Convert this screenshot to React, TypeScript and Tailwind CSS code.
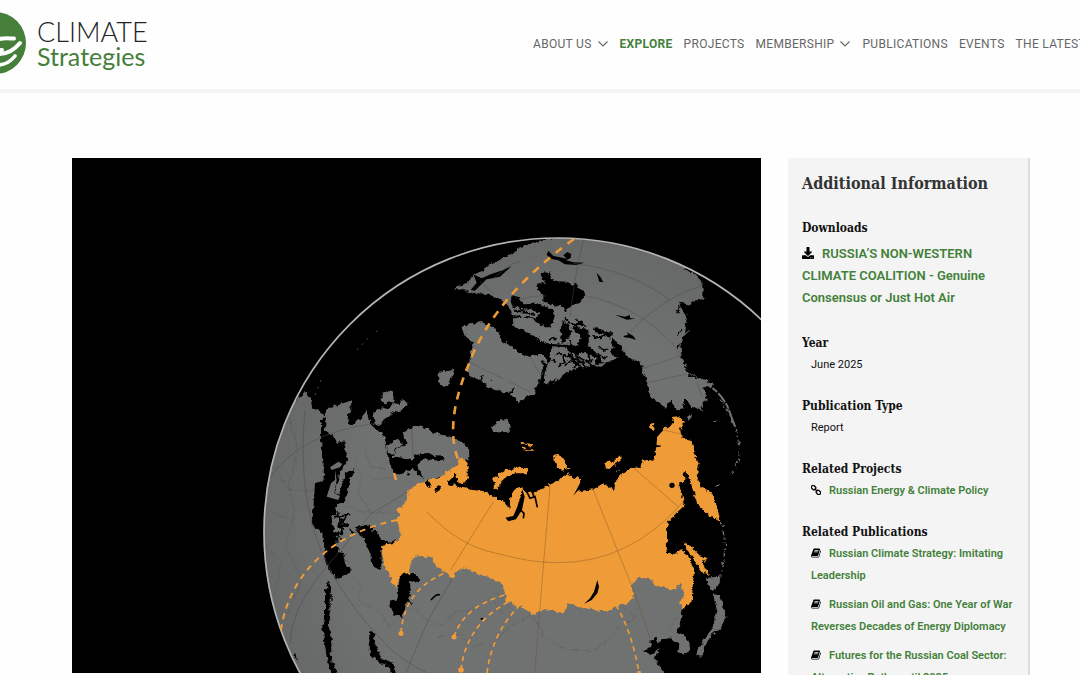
import React from "react";
import { FaDownload } from "react-icons/fa";

const navItems = [
  { label: "ABOUT US", menu: true },
  { label: "EXPLORE", active: true },
  { label: "PROJECTS" },
  { label: "MEMBERSHIP", menu: true },
  { label: "PUBLICATIONS" },
  { label: "EVENTS" },
  { label: "THE LATEST" },
];

const publications = [
  "Russian Climate Strategy: Imitating Leadership",
  "Russian Oil and Gas: One Year of War Reverses Decades of Energy Diplomacy",
  "Futures for the Russian Coal Sector: Alternative Paths until 2035",
];

function Chevron() {
  return (
    <svg className="h-3 w-3" viewBox="0 0 12 12" fill="none" stroke="#666" strokeWidth="1.1" aria-hidden="true">
      <path d="M1.500 3.500 6 8l4.500-4.500" />
    </svg>
  );
}

function BookIcon() {
  return (
    <svg className="mr-2 inline h-[10px] w-[10px] align-[-1px]" viewBox="60 128 1680 1540" fill="#000" aria-hidden="true">
      <path d="M1703 478q40 57 18 129l-275 906q-19 64-76.5 107.5t-122.5 43.5h-923q-77 0-148.5-53.5t-99.5-131.5q-24-67-2-127 0-4 3-27t4-37q1-8-3-21.5t-3-19.5q2-11 8-21t16.5-23.5 16.5-23.5q23-38 45-91.5t30-91.5q3-10 .5-30t-.5-28q3-11 17-28t17-23q21-36 42-92t25-90q1-9-2.5-32t.5-28q4-13 22-30.5t22-22.5q19-26 42.5-84.5t27.5-96.5q1-8-3-25.5t-2-26.5q2-8 9-18t18-23 17-21q8-12 16.5-30.5t15-35 16-36 19.5-32 26.5-23.5 36-11.5 47.5 5.5l-1 3q38-9 51-9h761q74 0 114 56t18 130l-274 906q-36 119-71.5 153.5t-128.5 34.5h-869q-27 0-38 15-11 16-1 43 24 70 144 70h923q29 0 56-15.5t35-41.5l300-987q7-22 5-57 38 15 59 43zm-1064 2q-4 13 2 22.5t20 9.5h608q13 0 25.5-9.5t16.5-22.5l21-64q4-13-2-22.5t-20-9.5h-608q-13 0-25.5 9.5t-16.5 22.5zm-83 256q-4 13 2 22.5t20 9.5h608q13 0 25.5-9.5t16.5-22.5l21-64q4-13-2-22.5t-20-9.5h-608q-13 0-25.5 9.5t-16.5 22.5z" />
    </svg>
  );
}

function ChainIcon() {
  return (
    <svg className="mr-2 inline h-[10px] w-[10px] align-[-1px]" viewBox="0 0 20 20" fill="none" stroke="#000" strokeWidth="2.600" aria-hidden="true">
      <g transform="rotate(45 10 10)">
        <rect x="-1.500" y="6.500" width="9.500" height="7" rx="3" />
        <rect x="12" y="6.500" width="9.500" height="7" rx="3" />
        <path d="M6 10h8" />
      </g>
    </svg>
  );
}

function Logo() {
  return (
    <a href="#" className="flex shrink-0 items-center">
      <svg className="h-[62px] w-[27px]" viewBox="0 0 27 62" aria-hidden="true">
        <circle cx="-5" cy="31" r="31" fill="#467f3a" />
        <g fill="none" stroke="#fff" strokeLinecap="round">
          <path d="M-4 28C2 25.500 8 26.500 14 26.500" strokeWidth="4" />
          <path d="M-4 42C8 43 15 37 20 31" strokeWidth="4" />
          <path d="M-3 53C5 53 11 49 15 44" strokeWidth="3.600" />
          <path d="M-2 38.500 2 38" strokeWidth="4" />
        </g>
      </svg>
      <span className="ml-[10px] flex flex-col pt-[2px] font-[Lato,sans-serif]">
        <span className="text-[27px] font-light leading-[24px] text-[#222]">CLIMATE</span>
        <span className="text-[25px] leading-[24px] text-[#467f3a]">Strategies</span>
      </span>
    </a>
  );
}

const GREY = "#707271";
const ORANGE = "#ef9c38";

function Coast({ fill, d }: { fill: string; d: string }) {
  return <path filter="url(#coast)" fill={fill} d={d} />;
}

function Globe() {
  return (
    <svg className="block h-auto w-full bg-black" viewBox="72 158 689 515" role="img" aria-label="Globe centred on Russia">
      <defs>
        <clipPath id="disc">
          <circle cx="558" cy="532" r="294" />
        </clipPath>
        <radialGradient id="shade" gradientUnits="userSpaceOnUse" cx="558" cy="532" r="294">
          <stop offset="0.7" stopColor="#000" stopOpacity="0" />
          <stop offset="1" stopColor="#000" stopOpacity="0.08" />
        </radialGradient>
        {/* Roughens the simplified outlines into natural coastlines */}
        <filter id="coast" x="-5%" y="-5%" width="110%" height="110%" colorInterpolationFilters="sRGB">
          <feTurbulence type="fractalNoise" baseFrequency="0.07" numOctaves="3" seed="4" result="noise" />
          <feDisplacementMap in="SourceGraphic" in2="noise" scale="17" xChannelSelector="R" yChannelSelector="G" />
        </filter>
      </defs>
      <rect x="72" y="158" width="689" height="515" fill="#000" />
      <g clipPath="url(#disc)">
        {/* North America, Greenland, Alaska */}
        <g transform="translate(430 230) scale(.33333)">
          <Coast fill={GREY} d="M270 52 330 32 390 20 450 20 540 32 640 54 700 72 745 98 765 118 790 130 812 150 820 180 820 205 795 212 768 222 750 218 760 240 772 258 765 290 777 300 762 315 752 350 755 385 772 425 815 448 852 463 845 470 822 468 830 510 812 530 820 545 800 533 782 517 765 507 758 522 745 543 730 525 722 505 705 532 680 515 655 487 652 460 640 425 632 398 600 383 570 385 530 395 515 410 485 407 440 415 415 425 395 440 370 455 338 460 345 425 360 385 365 345 315 325 290 305 250 290 248 245 230 222 205 205 180 195 130 192 100 178 70 178 85 168 110 160 135 133 160 120 185 100 240 75Z" />
          <Coast fill={GREY} d="M95 290 125 282 150 276 185 290 210 310 215 335 240 345 260 362 295 380 325 372 345 378 350 400 335 440 320 470 315 490 290 500 262 517 240 490 200 482 170 465 150 450 118 438 112 415 122 375 128 345 112 320 97 300Z" />
          <Coast fill={GREY} d="M26 430 40 418 60 422 66 414 73 432 62 445 52 468 34 468 25 450ZM185 593 205 575 228 567 243 590 235 606 190 606Z" />
          <Coast fill="#000" d="M323 165 335 158 348 158 338 145 332 130 345 126 362 132 366 148 385 154 410 155 440 168 462 182 466 196 455 205 452 220 430 223 405 245 398 228 370 226 340 218 340 195 325 180ZM240 205 255 198 270 205 274 218 305 222 330 218 348 232 370 235 375 260 360 290 330 285 318 262 330 248 300 240 268 236 246 228ZM215 330 235 320 225 300 248 288 290 305 320 325 365 345 360 370 345 378 325 372 298 380 262 360 238 345ZM395 270 415 280 422 300 418 322 398 340 392 310ZM435 280 450 296 475 300 480 340 465 355 440 345 455 322 448 310 430 305ZM485 290 520 300 545 310 548 320 500 308ZM540 325 560 335 575 355 595 382 570 388 540 365 552 350ZM362 342 420 345 480 350 505 375 520 398 495 405 500 380 470 370 420 368 410 355 364 352Z" />
          <path fill="#000" d="M355 62 370 78 390 82 410 86 400 76 412 66 424 72 422 84 408 91 430 97 463 98 440 105 405 103 385 91 362 86 350 74ZM130 133 155 145 182 133 220 120 245 108 210 140 170 148 152 165 135 182 122 180 140 158ZM500 128 512 142 520 157 508 155ZM555 254 585 260 600 255 600 264 616 266 590 269ZM580 318 595 314 590 306 610 318 618 330 600 324 583 322ZM750 220 766 222 768 250 782 262 778 300 765 310 772 265 760 245ZM310 80 360 70 325 77 297 83Z" />
          <g filter="url(#coast)" fill="none" stroke="#000" strokeWidth="6">
            <path d="M376 375 390 365 402 380 415 375 430 390 450 385 470 395 490 390M405 405 420 392 438 402 455 395 470 410M385 410 405 395 400 380M448 350 442 378 450 412M475 365 480 410M420 330 422 370 436 395 430 415M405 265 425 282 455 278 470 292M285 260 310 265 330 278M255 242 290 245 315 255M490 320 510 325 530 315M365 390 380 400M510 355 535 360M245 258 280 262M205 300 218 322M338 395 345 410 334 430 340 455M380 320 360 330M500 375 530 385M440 270 460 290" />
            <path strokeWidth="4" d="M150 450 160 435M175 467 185 452M205 480 212 462M240 490 250 475M750 225 740 250M755 300 742 320M750 340 742 355M775 430 800 446" />
          </g>
          <path fill="none" stroke={GREY} strokeWidth="6" d="M815 455Q870 480 895 535L915 590" strokeDasharray="34 4 18 5" />
          <g fill="none" stroke="#4d4f4e" strokeOpacity=".55" strokeWidth="2.500">
            <path d="M460 30Q435 130 420 260M820 165Q700 200 600 305M470 198Q650 235 755 375M430 100Q600 120 720 210M640 415 755 375M652 458 770 432M270 208Q310 195 348 198M120 398 300 485M300 380 335 442M150 155 190 190M800 455 818 505M190 145 240 105 270 95" />
          </g>
        </g>

        {/* Europe, Africa, Middle East */}
        <g transform="translate(255 380) scale(.33333)">
          <Coast fill={GREY} d="M-30 900-30 300 60 100 122 60 150 36 166 50 172 86 195 90 206 115 216 90 240 76 268 68 290 62 284 95 277 132 300 132 318 115 335 92 340 115 352 140 383 158 392 185 400 235 412 262 418 285 450 275 480 262 500 282 520 300 580 400 750 560 780 900Z" />
          <Coast fill={GREY} d="M440 160 465 145 497 136 525 152 548 162 580 168 620 185 642 205 643 235 630 240 600 262 560 290 522 302 500 285 478 258 450 240 410 235 420 212 458 190 450 175Z" />
          <Coast fill={GREY} d="M380 42 400 36 415 42 416 66 392 70 380 58ZM355 95 380 82 400 88 412 70 435 72 444 55 458 72 440 90 412 98 390 118 375 138 358 132ZM395 200 420 180 438 182 440 198 420 208 412 225 398 215ZM552 0 580 0 582 10 565 20 552 12ZM685 0 700 20 735 26 760 28 760 0Z" />
          <Coast fill="#000" d="M198 118 212 112 210 150 232 165 248 190 268 180 272 215 280 240 262 262 250 300 240 340 250 348 262 310 270 280 298 268 285 300 275 350 262 365 240 380 245 400 230 410 235 445 240 480 250 515 268 520 270 540 290 565 285 578 245 598 225 570 210 540 205 510 202 460 170 435 175 390 180 310 205 300 207 260 198 180Z" />
          <path fill={GREY} d="M225 262 250 245 262 252 255 262 230 270ZM228 310 240 300 240 270 245 300 238 340 255 348 250 360 215 350ZM268 545 276 540 288 562 275 560Z" />
          <Coast fill="#000" d="M300 440 310 462 325 475 345 520 355 560 378 570 380 540 378 500 392 495 425 490 422 478 405 488 382 482 372 460 348 450 362 438 340 434 310 436ZM435 580 465 578 490 590 498 600 482 608 462 602 464 650 448 680 442 716 415 700 403 670 428 655ZM220 600 228 625 226 690 218 735 230 770 228 840 252 882 228 882 215 830 202 740 210 720 210 640ZM342 752 358 762 362 800 382 835 415 850 425 882 405 882 402 862 370 850 345 820ZM118 818 132 840 128 840 118 826Z" />
          <Coast fill="#000" d="M400 230 415 235 440 232 470 242 485 225 520 218 538 228 560 226 566 238 550 242 510 236 488 248 492 265 505 298 490 285 470 262 445 275 418 270 410 255ZM455 282 470 278 462 292Z" />
          <path filter="url(#coast)" d="M240 410 280 405 262 425 278 440 250 430 262 460 240 460 262 480M250 400 262 450M232 440 245 485M456 660 470 670M285 445 298 462" fill="none" stroke="#000" strokeWidth="6" />
          <path d="M528 660Q545 640 555 645M677 718 690 712M700 716 735 726" fill="none" stroke="#000" strokeWidth="5" />
          <g fill="none" stroke="#4c4e4d" strokeOpacity=".6" strokeWidth="2.500">
            <path d="M150 90Q130 300 180 460T380 780Q440 845 520 880M40 300Q130 160 360 130M510 305 350 400 215 560Q110 680 105 790M595 590 520 720 450 885M470 145 475 230" />
            <path filter="url(#coast)" strokeOpacity=".35" d="M100 100 130 220 100 320 120 400 90 500 140 600 100 700M60 260 100 330 180 330M60 400 110 420M30 500 80 540 60 640M300 240 320 290 310 340 350 400M330 200 345 260 390 270M350 300 420 290M290 580 320 620 310 660 380 700M380 700 400 740 470 680 520 720 560 740M560 740 600 700 680 680M550 770 620 765 650 800 700 790M270 380 330 395 420 400" />
          </g>
          <Coast fill={ORANGE} d="M378 495 412 490 438 480 435 440 424 420 432 400 424 385 442 380 456 358 457 335 490 308 520 298 552 296 580 272 608 258 606 240 625 235 638 250 638 295 625 312 640 320 665 322 700 338 735 350 790 330 790 640 745 625 740 608 715 606 695 590 660 575 620 562 598 582 595 598 580 590 570 572 545 562 530 535 500 528 478 530 468 545 462 580 435 582 425 625 415 615 405 590 388 560Z" />
          <Coast fill="#000" d="M508 304 520 298 530 318 524 326 514 320ZM538 330 550 318 556 322 545 340ZM580 305 590 295 602 275 608 306 630 314 650 322 655 312 668 322 685 315 700 318 720 335 735 305 755 300 760 360 725 360 710 345 680 332 650 330 632 325 605 322 598 310 582 318Z" />
        </g>

        {/* East Asia and the Russian Far East */}
        <g transform="translate(490 400) scale(.33333)">
          <Coast fill={GREY} d="M-20 520 620 520 590 620 572 665 565 698 590 710 602 740 580 768 565 755 568 735 540 712 510 735 500 760 495 775 510 800 540 850-20 850Z" />
          <Coast fill="#000" d="M460 752 480 742 482 722 500 710 502 730 540 712 510 740 485 765Z" />
          <Coast fill={ORANGE} d="M-40 300 20 290 38 325 60 322 70 290 95 262 110 280 135 276 165 260 200 245 230 218 245 230 270 238 272 255 258 275 310 268 340 250 372 272 380 240 410 210 450 200 460 178 490 182 498 145 502 110 525 85 550 68 552 50 568 48 582 70 570 85 575 115 605 120 612 160 628 195 620 225 632 260 655 270 672 295 682 325 690 362 665 350 632 325 610 280 590 225 580 215 588 250 570 250 580 290 592 302 578 325 560 340 535 370 532 445 550 455 575 448 600 480 612 510 612 560 605 605 580 628 568 605 580 595 575 548 550 572 520 560 500 560 490 545 465 530 440 535 425 555 430 590 418 608 375 618 360 632 335 634 290 625 235 610 222 640 165 628 125 645 95 620 50 608 45 575 30 545-40 520Z" />
          <path fill="#000" d="M96 265 104 290 96 330 78 358 55 364 46 353 70 348 82 320 90 290ZM250 287 275 240 272 262ZM322 540 327 560 322 580 305 600 282 612 300 595 312 575Z" />
          <Coast fill="#000" d="M585 210 598 235 610 275 625 315 660 350 690 365 695 400 640 480 600 448 580 428 575 445 560 460 530 462 532 370 560 338 585 315 575 280 567 250 582 248ZM580 625 605 605 612 510 640 525 650 600 620 720 595 745 602 735 590 708 563 698ZM28 240 50 226 80 222 110 225 110 262 85 270 62 290 58 325 40 300 28 275Z" />
          <Coast fill={ORANGE} d="M10 236 45 212 85 202 114 206 112 220 75 220 45 234 32 246 24 268 12 262ZM190 172 208 162 225 185 236 207 215 212 198 197ZM343 190 362 180 370 185 390 166 392 182 372 194 365 208 348 205ZM480 72 492 68 494 92 482 90ZM60 322 62 290 72 270 96 262 92 290 78 322Z" />
          <Coast fill={ORANGE} d="M580 424 605 441 632 470 650 476 638 490 658 528 642 520 618 488 598 460ZM605 235 630 262 655 270 672 295 682 325 690 362 665 350 632 325 615 290Z" />
          <path filter="url(#coast)" fill="none" stroke={ORANGE} strokeWidth="5" strokeDasharray="12 3 7 4" d="M92 130 105 128 125 140M96 142 115 150 132 150" />
          <path fill="none" stroke="#000" strokeWidth="5" d="M108 270 120 295 135 290 142 322M92 330 102 340 100 355M125 272 132 290M530 450 550 462M490 140 512 138" />
          <circle cx="546" cy="256" r="8" fill="#000" />
          <Coast fill={GREY} d="M650 535 675 530 692 525 688 552 672 572 658 560ZM668 580 690 588 700 620 710 650 690 685 665 705 642 740 640 770 618 768 625 745 650 710 672 670 680 625ZM5 78 25 75 35 58 48 62 45 78 62 92 42 92 22 98ZM495 0 515 5 525 25 545 0ZM555 5 572 0 578 25 562 30ZM590 0 640 0 635 22 605 22ZM596 45 602 45 600 62 595 58Z" />
          <path filter="url(#coast)" fill="none" stroke={GREY} strokeWidth="4" strokeDasharray="14 7 4 8" d="M690 0Q740 60 748 150 748 180 735 205M690 360Q715 430 695 520M676 258 690 255M722 218 732 216M670 65 690 62M380 212 390 210" />
          <g fill="none" stroke="#6b4a20" strokeOpacity=".45" strokeWidth="2.500">
            <path d="M180 260 160 500 134 820M310 270 430 570 480 715M432 205 565 320M520 90 572 102M-190 335Q-90 440 20 460 120 488 200 488 420 490 580 305M10 305-118 510" />
          </g>
          <path filter="url(#coast)" fill="none" stroke="#4c4e4d" strokeOpacity=".4" strokeWidth="2.500" d="M0 740 60 680 120 645 150 680 160 710 220 745 300 752 360 720 380 690 440 650 400 625M20 580 60 620M0 590 40 640M580 630 530 690" />
        </g>
        <circle cx="558" cy="532" r="294" fill="url(#shade)" />
      </g>
      <circle cx="558" cy="532" r="294" fill="none" stroke="#b4b4b4" strokeWidth="1.700" />

      {/* Trade and diplomacy arcs */}
      <g fill="none" stroke={ORANGE}>
        <path d="M574 239C520 278 485 320 468 366 450 410 450 440 459 462" strokeWidth="2.600" strokeDasharray="8 7" />
        <path d="M281 630C288 580 325 535 397 520" strokeWidth="2" strokeDasharray="6 5" />
        <path d="M401 633Q404 590 445 573" strokeWidth="1.700" strokeDasharray="5 4" />
        <path d="M454 637Q464 606 505 595" strokeWidth="1.700" strokeDasharray="5 4" />
        <path d="M461 670Q466 625 508 602" strokeWidth="1.700" strokeDasharray="5 4" />
        <path d="M487 673Q492 633 520 605" strokeWidth="1.700" strokeDasharray="5 4" />
        <path d="M616 605Q632 632 639 673" strokeWidth="1.700" strokeDasharray="5 4" />
        <path d="M394 473 396 480" strokeWidth="2.500" />
      </g>
      <g fill={ORANGE}>
        <circle cx="401" cy="633.500" r="2.500" />
        <circle cx="454" cy="637" r="2.500" />
        <circle cx="461" cy="670" r="2.800" />
        <circle cx="639" cy="673" r="2.200" />
      </g>
      <path stroke="#666" strokeWidth=".8" strokeDasharray="2 5" fill="none" d="M357 350 368 338M315 395 321 380M376 332 378 330" />
    </svg>
  );
}

function SectionTitle({ children }: { children: React.ReactNode }) {
  return (
    <h3 className="font-['Roboto_Slab','DejaVu_Serif_Condensed',serif] text-[12px] font-bold leading-[22px] text-[#111]">
      {children}
    </h3>
  );
}

export default function App() {
  return (
    <div className="min-h-screen overflow-x-hidden bg-[#fefefe] font-[Roboto,sans-serif] text-[#111]">
      <header className="flex items-start justify-between overflow-hidden border-b-4 border-[#f3f5f5] pb-[15px] pt-[12px]">
        <Logo />
        <nav className="w-[547px] shrink-0 overflow-hidden pt-[21px]" aria-label="Main">
          <ul className="flex gap-[11px] whitespace-nowrap text-xs leading-[22px] tracking-wide text-[#666]">
            {navItems.map((item) => (
              <li key={item.label}>
                <a href="#" className={item.active ? "font-bold text-[#43803a]" : "flex items-center gap-[5px]"}>
                  {item.label}
                  {item.menu && <Chevron />}
                </a>
              </li>
            ))}
          </ul>
        </nav>
      </header>

      <main className="flex items-start gap-[27px] pl-[72px] pr-[50px] pt-[65px]">
        <div className="min-w-0 flex-1">
          <Globe />
        </div>
        <aside className="w-[242px] shrink-0 border-r-2 border-[#dcdcdc] bg-[#f4f4f4] pb-6 pl-[14px] pr-3 pt-[15px]">
          <h2 className="mb-[22px] whitespace-nowrap font-['Roboto_Slab','DejaVu_Serif_Condensed',serif] text-[16px] font-bold leading-[22px] text-[#333]">
            Additional Information
          </h2>

          <SectionTitle>Downloads</SectionTitle>
          <p className="mb-[23px] mt-[4px] text-[13px] font-semibold leading-[22px] text-[#43803a]">
            <FaDownload className="mr-[8px] inline h-3 w-3 align-[-1px] text-black" aria-hidden="true" />
            <a href="#">RUSSIA’S NON-WESTERN CLIMATE COALITION - Genuine Consensus or Just Hot Air</a>
          </p>

          <div className="flex flex-col gap-[19px] text-[11px] leading-[22px]">
            <section>
              <SectionTitle>Year</SectionTitle>
              <p className="pl-[9px]">June 2025</p>
            </section>
            <section>
              <SectionTitle>Publication Type</SectionTitle>
              <p className="pl-[9px]">Report</p>
            </section>
            <section>
              <SectionTitle>Related Projects</SectionTitle>
              <p className="pl-[9px] font-semibold text-[#43803a]">
                <ChainIcon />
                <a href="#">Russian Energy &amp; Climate Policy</a>
              </p>
            </section>
            <section>
              <SectionTitle>Related Publications</SectionTitle>
              <ul className="flex flex-col gap-[7px] pl-[9px] font-semibold text-[#43803a]">
                {publications.map((title) => (
                  <li key={title}>
                    <BookIcon />
                    <a href="#">{title}</a>
                  </li>
                ))}
              </ul>
            </section>
          </div>
        </aside>
      </main>
    </div>
  );
}
